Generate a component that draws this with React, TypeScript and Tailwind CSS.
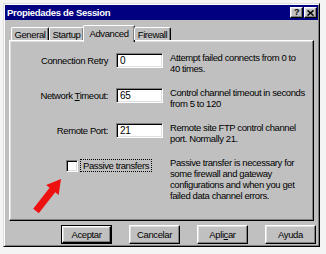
import React from "react";

const raised =
  "border border-t-white border-l-white border-r-black border-b-black shadow-[inset_-1px_-1px_#808080,inset_1px_1px_#dfdfdf]";
const sunken =
  "border border-t-[#808080] border-l-[#808080] border-r-white border-b-white shadow-[inset_1px_1px_#000,inset_-1px_-1px_#dfdfdf]";

const rows = [
  { label: "Connection Retry", value: "0", desc: ["Attempt failed connects from 0 to", "40 times."] },
  { label: "Network Timeout:", value: "65", desc: ["Control channel timeout in seconds", "from 5 to 120"], u: "T" },
  { label: "Remote Port:", value: "21", desc: ["Remote site FTP control channel", "port. Normally 21."] },
];

const tabs = [
  { name: "General", w: "w-[38px]" },
  { name: "Startup", w: "w-[35px]" },
  { name: "Advanced", w: "w-[52px]", active: true },
  { name: "Firewall", w: "w-[37px]" },
];

const Label = ({ text, u }: { text: string; u?: string }) => {
  if (!u) return <>{text}</>;
  const i = text.indexOf(u);
  return (
    <>
      {text.slice(0, i)}
      <span className="underline">{text[i]}</span>
      {text.slice(i + 1)}
    </>
  );
};

export default function App() {
  return (
    <div
      className="relative w-[326px] h-[254px] overflow-hidden bg-[#f4f4f4] text-black text-[9.5px] tracking-[-0.4px]"
      style={{ fontFamily: '"Liberation Sans", Arial, sans-serif' }}
    >
      <div className="ml-[3px] mt-[3px] w-[317px] h-[244px] bg-[#c0c0c0] border border-t-[#dfdfdf] border-l-[#dfdfdf] border-r-black border-b-black shadow-[inset_1px_1px_white,inset_-1px_-1px_#808080] p-[1px] flex flex-col">
        {/* title bar */}
        <div className="h-[15px] bg-[#000080] flex items-center pl-[2px] pr-[1px]">
          <span className="text-white font-bold text-[9.5px] tracking-[-0.3px] leading-none">
            Propiedades de Session
          </span>
          <div className="ml-auto flex gap-[1px]">
            <div className={`${raised} w-[13px] h-[11px] bg-[#c0c0c0] flex items-center justify-center font-bold text-[9px] leading-none`}>
              ?
            </div>
            <div className={`${raised} w-[13px] h-[11px] bg-[#c0c0c0] flex items-center justify-center`}>
              <svg width="7" height="6" viewBox="0 0 7 6">
                <path d="M0.5 0.5L6.5 5.5M6.5 0.5L0.5 5.5" stroke="black" strokeWidth="1.6" />
              </svg>
            </div>
          </div>
        </div>

        {/* tabs */}
        <div className="mt-[5px] ml-[6px] h-[15px] flex items-end relative z-10">
          {tabs.map((t) =>
            t.active ? (
              <div
                key={t.name}
                className={`${t.w} h-[17px] -mb-[2px] -mx-[1px] bg-[#c0c0c0] border-t border-l border-t-white border-l-white border-r border-r-black shadow-[inset_-1px_0_#808080] rounded-t-[2px] flex items-start justify-center pt-[2px] leading-[11px]`}
              >
                {t.name}
              </div>
            ) : (
              <div
                key={t.name}
                className={`${t.w} h-[13px] bg-[#c0c0c0] border-t border-l border-t-white border-l-white border-r border-r-black shadow-[inset_-1px_0_#808080] rounded-t-[2px] flex items-center justify-center leading-[11px]`}
              >
                {t.name}
              </div>
            )
          )}
        </div>

        {/* panel */}
        <div className="ml-[4px] w-[305px] h-[181px] border border-t-white border-l-white border-r-black border-b-black shadow-[inset_-1px_-1px_#808080,inset_1px_1px_#dfdfdf] pt-[12px] flex flex-col gap-[13px]">
          {rows.map((r) => (
            <div key={r.label} className="flex items-start h-[22px]">
              <div className="w-[99px] text-right leading-[15px] pr-[1px]">
                <Label text={r.label} u={r.u} />
              </div>
              <div className={`${sunken} ml-[7px] w-[47px] h-[15px] bg-white pl-[3px] leading-[13px] text-[10px]`}>
                {r.value}
              </div>
              <div className="ml-[7px] -mt-[1px] leading-[11px]">
                {r.desc.map((d) => (
                  <div key={d}>{d}</div>
                ))}
              </div>
            </div>
          ))}
          <div className="flex items-start">
            <div className="w-[153px] pl-[56px] pt-[1px] flex items-center">
              <div className={`${sunken} w-[12px] h-[12px] bg-white`} />
              <div className="ml-[2px] border border-dotted border-black px-[2px] leading-[11px]">
                Passive transfers
              </div>
            </div>
            <div className="ml-[7px] -mt-[1px] leading-[11px]">
              <div>Passive transfer is necessary for</div>
              <div>some firewall and gateway</div>
              <div>configurations and when you get</div>
              <div>failed data channel errors.</div>
            </div>
          </div>
        </div>

        {/* buttons */}
        <div className="mt-[4px] pr-[2px] flex justify-end gap-[17px]">
          <div className="w-[51px] h-[19px] border border-black bg-[#c0c0c0]">
            <div className={`${raised} w-full h-full flex items-center justify-center leading-none`}>Aceptar</div>
          </div>
          <div className={`${raised} w-[51px] h-[19px] flex items-center justify-center leading-none`}>Cancelar</div>
          <div className={`${raised} w-[51px] h-[19px] flex items-center justify-center leading-none`}>
            <Label text="Aplicar" u="c" />
          </div>
          <div className={`${raised} w-[51px] h-[19px] flex items-center justify-center leading-none`}>Ayuda</div>
        </div>
      </div>

      {/* red annotation arrow */}
      <svg className="absolute inset-0 pointer-events-none" width="326" height="254" viewBox="0 0 326 254">
        <polygon
          points="61,179 58.7,194.9 55.2,192.2 38.8,213.2 33.2,208.8 49.6,187.8 46.1,185.1"
          fill="#ee1111"
        />
      </svg>
    </div>
  );
}
